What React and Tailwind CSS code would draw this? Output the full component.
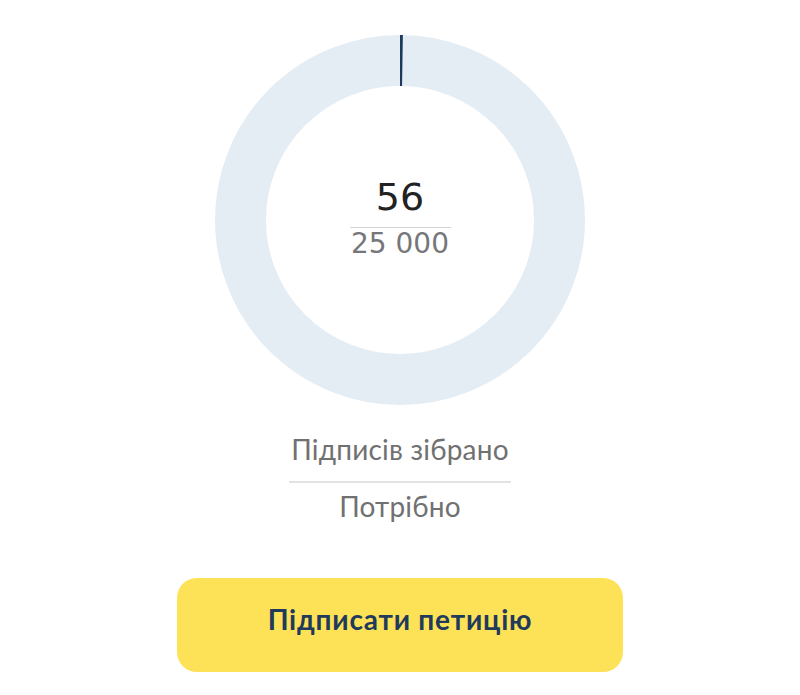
const collected = 56;
const required = 25000;

const ProgressRing = ({ value, total }) => {
  const r = 159.5;
  const c = 2 * Math.PI * r;
  const part = Math.max((value / total) * c, 2.5);

  return (
    <div className="relative w-[370px] h-[370px]">
      <svg width="370" height="370" viewBox="0 0 370 370" className="absolute inset-0">
        <circle cx="185" cy="185" r={r} fill="none" stroke="#e5edf4" strokeWidth="51" />
        <circle
          cx="185"
          cy="185"
          r={r}
          fill="none"
          stroke="#1d3a5c"
          strokeWidth="51"
          strokeDasharray={`${part} ${c}`}
          transform="rotate(-90 185 185)"
        />
      </svg>
      <div className="absolute inset-0 flex flex-col items-center justify-center font-['DejaVu_Sans',sans-serif]">
        <div className="text-[38px] leading-none text-[#222] mt-[-5px]">{collected}</div>
        <div className="w-[101px] h-px bg-[#d4d4d4] mt-[11px]" />
        <div className="text-[28px] leading-none text-[#75777a] mt-[2px]">25 000</div>
      </div>
    </div>
  );
};

const App = () => {
  return (
    <div className="w-[800px] h-[695px] bg-white flex flex-col items-center pt-[35px] font-['Lato',sans-serif]">
      <ProgressRing value={collected} total={required} />

      <div className="mt-[27px] flex flex-col items-center">
        <div className="text-[28px] leading-[34px] text-[#717171] tracking-[0.2px]">Підписів зібрано</div>
        <div className="w-[222px] h-[2px] bg-[#e2e2e2] mt-[15px]" />
        <div className="text-[28px] leading-[34px] text-[#717171] tracking-[0.2px] mt-[6px]">Потрібно</div>
      </div>

      <button className="mt-[55px] w-[446px] h-[94px] rounded-[20px] bg-[#fde258] text-[#1f3a5a] text-[28px] font-bold tracking-[0.8px] flex items-center justify-center pb-[13px]">
        Підписати петицію
      </button>
    </div>
  );
};

export default App;
